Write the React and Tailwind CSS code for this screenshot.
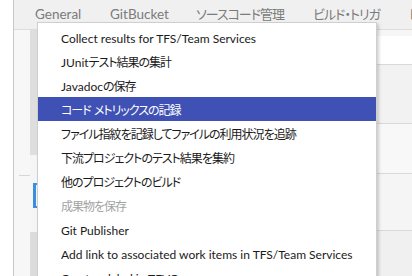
import React from "react";

const tabs = [
  { label: "General", w: "w-[75px]" },
  { label: "GitBucket", w: "w-[86px]" },
  { label: "ソースコード管理", w: "w-[117px]" },
  { label: "ビルド・トリガ", w: "w-[96px]" },
  { label: "ビルド環境", w: "w-[90px]" },
];

const items = [
  { label: "Collect results for TFS/Team Services" },
  { label: "JUnitテスト結果の集計" },
  { label: "Javadocの保存" },
  { label: "コード メトリックスの記録", active: true },
  { label: "ファイル指紋を記録してファイルの利用状況を追跡" },
  { label: "下流プロジェクトのテスト結果を集約" },
  { label: "他のプロジェクトのビルド" },
  { label: "成果物を保存", disabled: true },
  { label: "Git Publisher" },
  { label: "Add link to associated work items in TFS/Team Services" },
  { label: "Create a label in TFVC" },
];

const font = "font-['Lato','Noto_Sans_CJK_JP',sans-serif] [font-feature-settings:'palt']";

// japanese runs are set tighter, like Meiryo UI
const Text = ({ children, cjk = "text-[12px] tracking-[-1px]" }) =>
  children.split(/([\u3000-\u30ff\u4e00-\u9fff]+)/).map((part, i) =>
    i % 2 === 1 ? (
      <span key={i} className={cjk}>
        {part}
      </span>
    ) : (
      <span key={i} className="whitespace-pre">
        {part}
      </span>
    )
  );

const App = () => {
  return (
    <div className={`relative w-[412px] h-[276px] overflow-hidden bg-white flex ${font}`}>
      {/* left gutter */}
      <div className="w-[13px] shrink-0 bg-white" />

      {/* config panel */}
      <div className="flex-1 flex flex-col border-l border-[#c8c8c8] min-w-0">
        {/* tab bar */}
        <div className="h-[30px] shrink-0 bg-[#f0f0f0] flex items-center pl-[21px] border-b border-[#dcdcdc] whitespace-nowrap overflow-hidden">
          {tabs.map((tab) => (
            <span key={tab.label} className={`${tab.w} shrink-0 text-[13.5px] text-[#7b7b7b]`}>
              <Text cjk="text-[13px] tracking-[-1px]">{tab.label}</Text>
            </span>
          ))}
        </div>

        {/* form body */}
        <div className="flex-1 flex">
          <div className="w-[16px] shrink-0 bg-[#f7f7f7] flex flex-col">
            <div className="h-[145px]" />
            <div className="h-px ml-[5px] bg-[#d6d6d6]" />
          </div>
          <div className="w-[7px] shrink-0 flex flex-col bg-[#f5f5f5]">
            <div className="h-[125px] bg-[#dedede]" />
            <div className="h-[28px]" />
            <div className="h-[25px] border-l-[3px] border-y-2 border-[#3b8fdc] ml-[3px]" />
            <div className="h-[24px]" />
            <div className="flex-1 bg-[#dcdcdc]" />
          </div>
          <div className="flex-1 flex flex-col">
            <div className="h-[6px] bg-[#f6f6f6]" />
            <div className="h-[29px] bg-white border-b border-[#d9d9d9]" />
            <div className="h-[59px] bg-[#f2f2f2] border-b border-[#d9d9d9]" />
            <div className="h-[50px] bg-[#f8f8f8] border-b border-[#d9d9d9]" />
            <div className="h-[57px] bg-[#f5f5f5] border-b border-[#d9d9d9]" />
            <div className="flex-1 bg-[#f0f0f0]" />
          </div>
        </div>
      </div>

      {/* dropdown menu */}
      <div className="absolute left-[37px] top-[22px] w-[340px] h-[270px] bg-white border border-[#cfcfcf] shadow-[2px_2px_3px_rgba(0,0,0,0.18)] pt-[2px]">
        {items.map((item) => (
          <div
            key={item.label}
            className={`h-[24px] flex items-center pt-[4px] pl-[23px] text-[12px] whitespace-nowrap ${
              item.active
                ? "bg-[#3f51b5] text-white"
                : item.disabled
                ? "text-[#a3a3a3]"
                : "text-[#1a1a1a]"
            }`}
          >
            <Text>{item.label}</Text>
          </div>
        ))}
      </div>
    </div>
  );
};

export default App;
